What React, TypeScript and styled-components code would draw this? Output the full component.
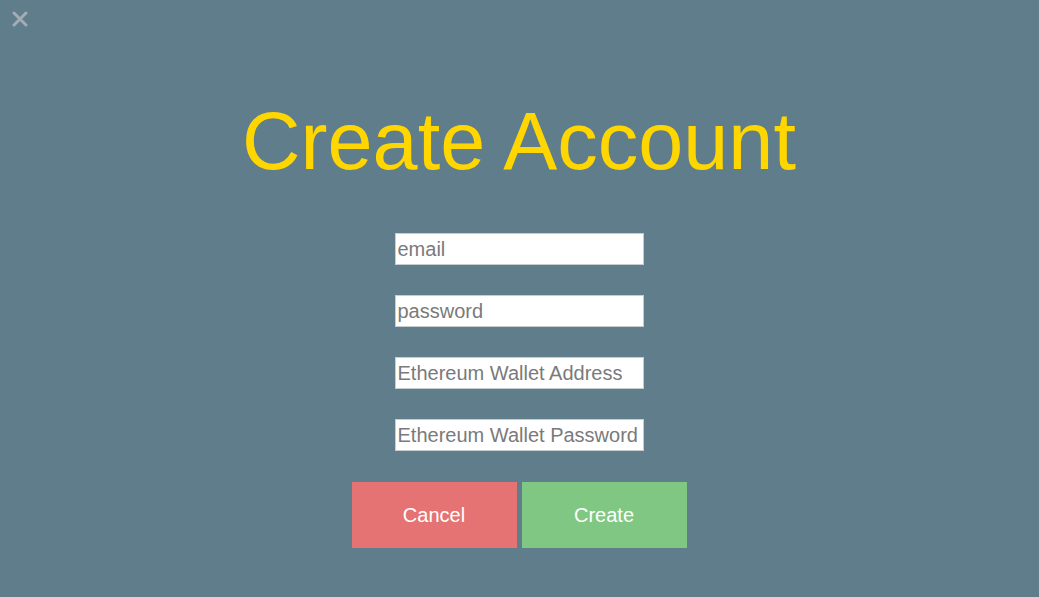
import styled, { createGlobalStyle } from "styled-components";
import { useState } from "react";

const GlobalStyle = createGlobalStyle`
  html, body {
    margin: 0;
    padding: 0;
    background-color: #607d8b;
    font-family: "Liberation Sans", Arial, sans-serif;
  }
`;

const Page = styled.div`
  min-height: 597px;
  display: flex;
  flex-direction: column;
  align-items: center;
  padding-right: 1px;
`;

const TopBar = styled.div`
  align-self: stretch;
  height: 38px;
  display: flex;
  align-items: center;
  padding-left: 12px;
`;

const CloseButton = styled.button`
  border: 0;
  background: none;
  padding: 0;
  width: 16px;
  height: 16px;
  cursor: pointer;
  display: flex;
`;

const Headline = styled.h1`
  margin: 59px 0 47px 0;
  font-size: 81px;
  font-weight: normal;
  line-height: 89px;
  color: #ffd600;
`;

const Form = styled.div`
  display: flex;
  flex-direction: column;
  align-items: center;
  gap: 30px;
`;

const Input = styled.input`
  box-sizing: border-box;
  width: 249px;
  height: 32px;
  padding: 0 2px;
  border: 1px solid #c8cdd0;
  background-color: white;
  font-family: "Liberation Sans", Arial, sans-serif;
  font-size: 20px;
  color: #333;
  outline: none;

  &::placeholder {
    color: #7a7a7a;
  }
`;

const ButtonRow = styled.div`
  display: flex;
  gap: 5px;
  margin-top: 31px;
`;

const ActionButton = styled.button<{ $color: string }>`
  width: 165px;
  height: 66px;
  border: 0;
  background-color: ${(p) => p.$color};
  color: white;
  font-family: "Liberation Sans", Arial, sans-serif;
  font-size: 20px;
  cursor: pointer;
`;

const fields = [
  { name: "email", type: "email", placeholder: "email" },
  { name: "password", type: "password", placeholder: "password" },
  { name: "walletAddress", type: "text", placeholder: "Ethereum Wallet Address" },
  { name: "walletPassword", type: "password", placeholder: "Ethereum Wallet Password" },
];

const App = () => {
  const [values, setValues] = useState<Record<string, string>>({});

  return (
    <Page>
      <GlobalStyle />
      <TopBar>
        <CloseButton aria-label="close">
          <svg width="16" height="16" viewBox="0 0 16 16">
            <path
              d="M2 2 L14 14 M14 2 L2 14"
              stroke="#a3adb3"
              strokeWidth="3"
              strokeLinecap="round"
            />
          </svg>
        </CloseButton>
      </TopBar>
      <Headline>Create Account</Headline>
      <Form>
        {fields.map((f) => (
          <Input
            key={f.name}
            type={f.type}
            placeholder={f.placeholder}
            value={values[f.name] || ""}
            onChange={(e) => setValues({ ...values, [f.name]: e.target.value })}
          />
        ))}
      </Form>
      <ButtonRow>
        <ActionButton $color="#e57373">Cancel</ActionButton>
        <ActionButton $color="#81c784">Create</ActionButton>
      </ButtonRow>
    </Page>
  );
};

export default App;
